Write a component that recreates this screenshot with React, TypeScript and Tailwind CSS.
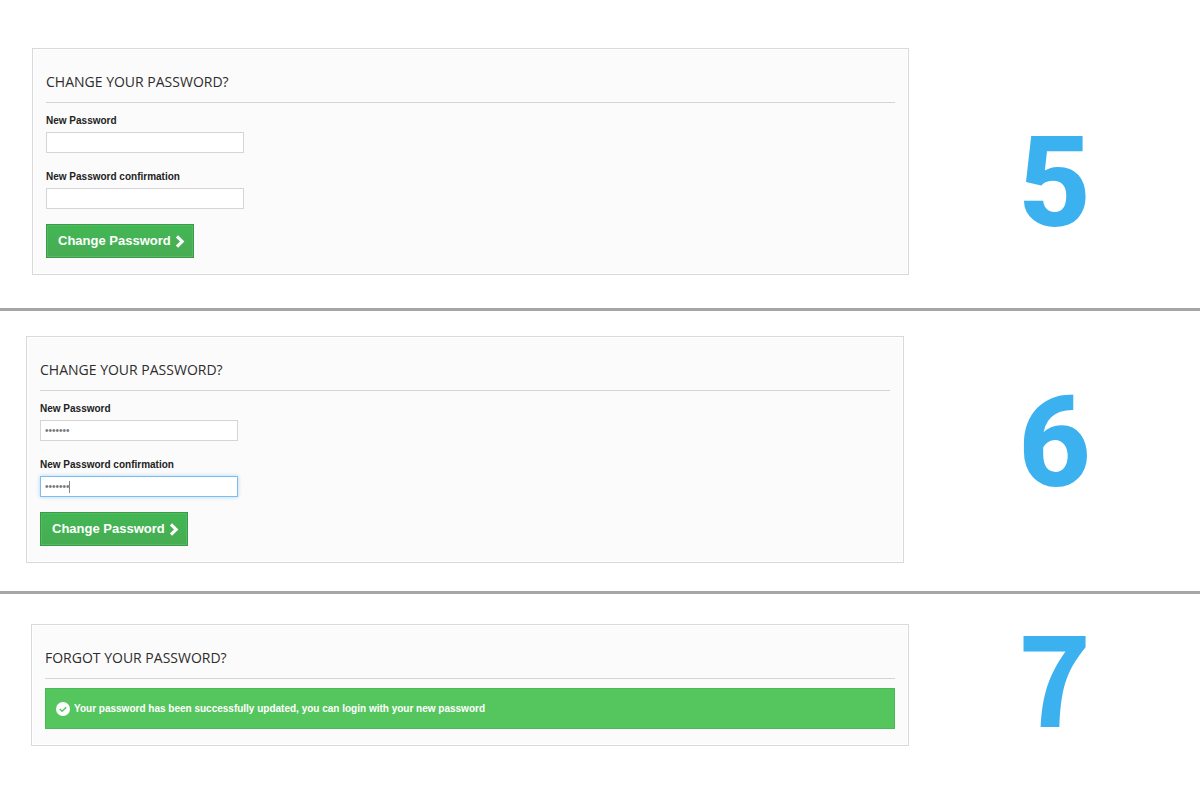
import { useId, type ReactNode } from 'react';

function Panel({ title, children }: { title: string; children: ReactNode }) {
  return (
    <div className="min-w-0 flex-1 border border-[#d9d9d9] bg-[#fbfbfb] px-[13px] pt-[22px] pb-4 shadow-[inset_0_0_0_1px_#ffffff]">
      <h2 className="mb-[9px] border-b border-[#d6d4d4] pb-[10px] font-['Open_Sans','Noto_Sans',sans-serif] text-[14px] leading-[21px] font-medium text-[#2f2c2c] uppercase">
        {title}
      </h2>
      {children}
    </div>
  );
}

function Field({ label, value, active = false }: { label: string; value?: string; active?: boolean }) {
  const id = useId();
  return (
    <div className="mb-[15px]">
      <label htmlFor={id} className="mb-[2px] block text-[10px] leading-[18px] font-bold text-[#222222]">
        {label}
      </label>
      <div className="relative w-[198px]">
        <input
          id={id}
          type="password"
          defaultValue={value}
          autoComplete="new-password"
          className={
            active
              ? 'block h-[21px] w-full border border-[#7dbdf0] bg-white px-1 text-[10px] text-[#777777] shadow-[0_0_4px_#a9d4f5] outline-none'
              : 'block h-[21px] w-full border border-[#d6d4d4] bg-white px-1 text-[10px] text-[#777777] outline-none'
          }
        />
        {active && <span className="absolute top-[5px] left-[29px] h-3 w-px bg-[#888888]" />}
      </div>
    </div>
  );
}

function PasswordForm({ value, active }: { value?: string; active?: boolean }) {
  return (
    <form onSubmit={(e) => e.preventDefault()}>
      <Field label="New Password" value={value} />
      <Field label="New Password confirmation" value={value} active={active} />
      <button
        type="submit"
        className="flex h-[34px] items-center gap-1 border border-[#399a49] bg-linear-to-b from-[#43b754] to-[#46ac52] pr-2 pl-[11px] text-[13px] font-bold text-white shadow-[inset_0_0_0_1px_#52bb61]"
      >
        Change Password
        <svg viewBox="0 0 9 12" className="h-[13px] w-[10px]" aria-hidden="true">
          <path d="M1.7 1.2 6.5 6 1.7 10.8" fill="none" stroke="currentColor" strokeWidth="2.9" />
        </svg>
      </button>
    </form>
  );
}

function StepNumber({ children }: { children: ReactNode }) {
  return (
    <div className="w-[291px] shrink-0 text-center text-[126px] leading-[96px] text-[#3bb1ef]">
      {children}
    </div>
  );
}

export default function App() {
  return (
    <main className="min-h-screen bg-white font-['Liberation_Sans',Arial,sans-serif]">
      <section className="flex border-b-[3px] border-[#a5a6a6] pt-12 pb-[33px] pl-8">
        <Panel title="Change your password?">
          <PasswordForm />
        </Panel>
        <div className="pt-[87px] font-[Roboto,sans-serif] font-extrabold">
          <StepNumber>5</StepNumber>
        </div>
      </section>
      <section className="flex border-b-[3px] border-[#a5a6a6] pt-[25px] pb-7 pl-[26px]">
        <Panel title="Change your password?">
          <PasswordForm value="secret7" active />
        </Panel>
        <div className="pt-[59px] pl-[5px] font-[Roboto,sans-serif] font-extrabold">
          <StepNumber>6</StepNumber>
        </div>
      </section>
      <section className="flex items-start pt-[30px] pl-[31px]">
        <Panel title="Forgot your password?">
          <p
            role="status"
            className="flex h-[41px] items-center gap-1 border border-[#4ab95a] bg-[#55c65e] pl-[10px] text-[10px] font-bold text-white"
          >
            <svg viewBox="0 0 14 14" className="size-[14px]" aria-hidden="true">
              <circle cx="7" cy="7" r="7" fill="currentColor" />
              <path d="m3.8 7 2.3 2.3 4.2-4.1" fill="none" stroke="#55c65e" strokeWidth="1.5" />
            </svg>
            Your password has been successfully updated, you can login with your new password
          </p>
        </Panel>
        <div className="font-['Noto_Sans_CJK_SC',sans-serif] font-bold">
          <StepNumber>7</StepNumber>
        </div>
      </section>
    </main>
  );
}
